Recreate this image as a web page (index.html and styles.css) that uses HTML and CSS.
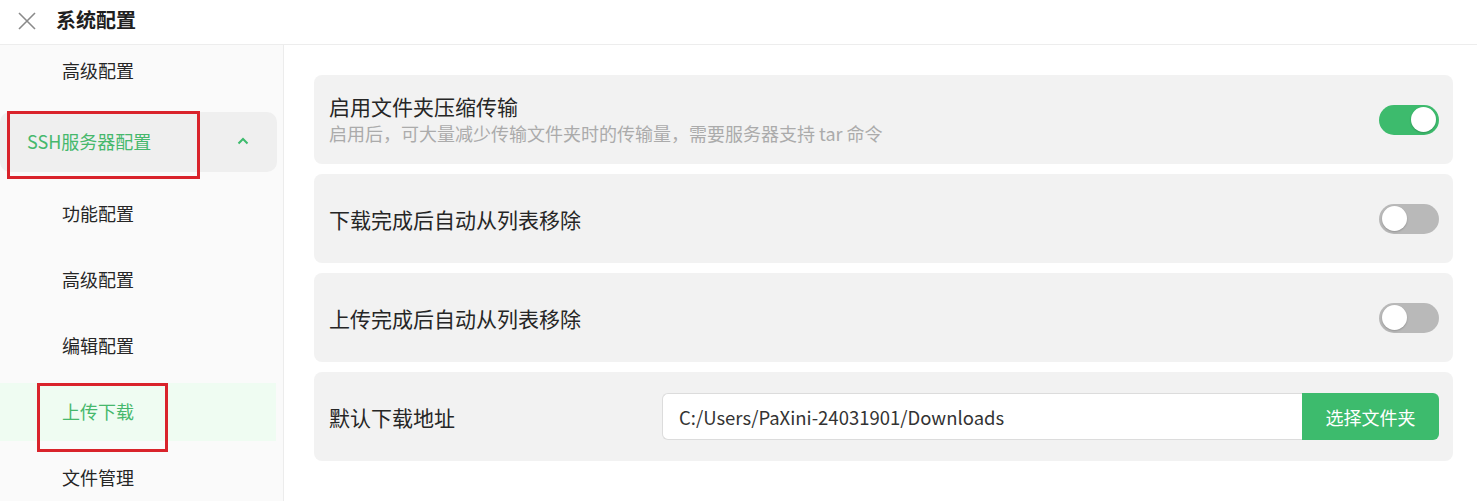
FILE: index.html
```html
<!DOCTYPE html>
<html lang="zh-CN">

<head>
    <meta charset="UTF-8">
    <meta name="viewport" content="width=device-width, initial-scale=1.0">
    <title>系统配置</title>
    <link rel="stylesheet" href="styles.css">
</head>

<body>
    <header class="topbar">
        <svg class="close-icon" width="18" height="18" viewBox="0 0 18 18">
            <path d="M1 1 L17 17 M17 1 L1 17" stroke="#8a8a8a" stroke-width="1.6" fill="none" />
        </svg>
        <h1>系统配置</h1>
    </header>

    <div class="layout">
        <!-- Menu lateral -->
        <aside class="sidebar">
            <div class="menu-item first">高级配置</div>
            <div class="menu-group">
                <span>SSH服务器配置</span>
                <svg class="chevron" width="12" height="8" viewBox="0 0 12 8">
                    <path d="M1.5 6.5 L6 2 L10.5 6.5" stroke="#3dbb6d" stroke-width="2" fill="none" />
                </svg>
            </div>
            <div class="menu-item">功能配置</div>
            <div class="menu-item">高级配置</div>
            <div class="menu-item">编辑配置</div>
            <div class="menu-item active">上传下载</div>
            <div class="menu-item">文件管理</div>

            <!-- marcações -->
            <div class="mark mark-ssh"></div>
            <div class="mark mark-upload"></div>
        </aside>

        <!-- Conteúdo -->
        <main class="content">
            <div class="card">
                <div class="card-text">
                    <div class="card-title">启用文件夹压缩传输</div>
                    <div class="card-desc">启用后，可大量减少传输文件夹时的传输量，需要服务器支持 tar 命令</div>
                </div>
                <div class="switch on"><span class="knob"></span></div>
            </div>
            <div class="card">
                <div class="card-title">下载完成后自动从列表移除</div>
                <div class="switch"><span class="knob"></span></div>
            </div>
            <div class="card">
                <div class="card-title">上传完成后自动从列表移除</div>
                <div class="switch"><span class="knob"></span></div>
            </div>
            <div class="card">
                <div class="card-title label">默认下载地址</div>
                <div class="path-group">
                    <input class="path-input" type="text" value="C:/Users/PaXini-24031901/Downloads">
                    <button class="btn-green">选择文件夹</button>
                </div>
            </div>
        </main>
    </div>
</body>

</html>
```

FILE: styles.css
```css
body {
    font-family: "Noto Sans CJK SC", "Noto Sans", sans-serif;
    margin: 0;
    padding: 0;
    background-color: white;
    color: #222;
    height: 501px;
    overflow: hidden;
}

.topbar {
    height: 44px;
    border-bottom: 1px solid #ededed;
    display: flex;
    align-items: center;
    padding-left: 18px;
    box-sizing: content-box;
}

.close-icon {
    margin-right: 20px;
    margin-top: -3px;
}

.topbar h1 {
    margin: 0;
    font-size: 20px;
    font-weight: bold;
    color: #1f1f1f;
    margin-top: -6px;
}

.layout {
    display: flex;
    height: 456px;
}

.sidebar {
    position: relative;
    width: 283px;
    flex-shrink: 0;
    background-color: #fafafa;
    border-right: 1px solid #ececec;
    overflow: hidden;
    display: flex;
    flex-direction: column;
}

.menu-item {
    height: 58px;
    flex-shrink: 0;
    margin: 0 7px 8px 0;
    padding-left: 62px;
    padding-bottom: 3px;
    box-sizing: border-box;
    display: flex;
    align-items: center;
    font-size: 18px;
    color: #262626;
}

.menu-item.first {
    margin-top: -3px;
}

.menu-item.active {
    background-color: #effcf2;
    color: #46b86c;
}

.menu-group {
    height: 60px;
    flex-shrink: 0;
    margin: 4px 6px 13px 0;
    padding: 0 27px 2px;
    box-sizing: border-box;
    background-color: #efefef;
    border-radius: 10px;
    display: flex;
    align-items: center;
    justify-content: space-between;
    font-size: 18px;
    color: #46b86c;
}

.chevron {
    margin-right: 1px;
}

.mark {
    position: absolute;
    border: 3px solid #d9232b;
    box-sizing: border-box;
}

.mark-ssh {
    left: 7px;
    top: 66px;
    width: 193px;
    height: 68px;
}

.mark-upload {
    left: 37px;
    top: 338px;
    width: 131px;
    height: 69px;
}

.content {
    flex: 1;
    padding: 30px 24px 0 30px;
    display: flex;
    flex-direction: column;
    gap: 10px;
}

.card {
    height: 89px;
    background-color: #f2f2f2;
    border-radius: 8px;
    padding: 0 14px 0 15px;
    display: flex;
    align-items: center;
    justify-content: space-between;
}

.card-title {
    font-size: 21px;
    color: #262626;
}

.card-text .card-title {
    line-height: 28px;
    margin-top: -1px;
}

.card-desc {
    font-size: 18px;
    color: #ababab;
    line-height: 26px;
}

.switch {
    position: relative;
    width: 60px;
    height: 30px;
    border-radius: 15px;
    background-color: #b9b9b9;
    flex-shrink: 0;
}

.switch.on {
    background-color: #3dbb6d;
}

.knob {
    position: absolute;
    top: 2.5px;
    left: 3px;
    width: 25px;
    height: 25px;
    border-radius: 50%;
    background-color: white;
    box-shadow: 0 1px 2px rgba(0, 0, 0, 0.2);
}

.switch.on .knob {
    left: auto;
    right: 3px;
}

.path-group {
    display: flex;
    width: 777px;
    height: 47px;
}

.path-input {
    flex: 1;
    border: 1px solid #dcdcdc;
    border-right: none;
    border-radius: 6px 0 0 6px;
    padding: 0 16px;
    font-family: "Noto Sans CJK SC", "Noto Sans", sans-serif;
    font-size: 18.5px;
    color: #333;
    background-color: white;
    outline: none;
}

.btn-green {
    width: 137px;
    border: none;
    border-radius: 0 6px 6px 0;
    background-color: #3dbb6d;
    color: white;
    font-family: "Noto Sans CJK SC", "Noto Sans", sans-serif;
    font-size: 18px;
    cursor: pointer;
}
```
